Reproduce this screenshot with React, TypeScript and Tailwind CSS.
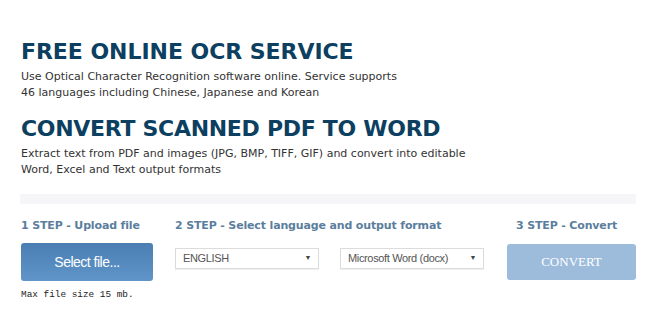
import React from 'react';

// Página de OCR: título, descrição e os três passos
const verdana = { fontFamily: 'Verdana, "DejaVu Sans", sans-serif' };

const Select: React.FC<{ label: string }> = ({ label }) => (
  <div className="flex h-[21px] w-[144px] items-center justify-between border border-[#dcdcdc] bg-white pl-[7px] pr-[7px] text-[11px] tracking-[-0.35px] text-[#555] shadow-[0_1px_1px_rgba(0,0,0,0.06)] [font-family:'Liberation_Sans',Arial,sans-serif]">
    <span>{label}</span>
    <span className="text-[7px] text-[#444]">▼</span>
  </div>
);

const App: React.FC = () => {
  return (
    <div className="h-[314px] w-[670px] overflow-hidden bg-white pl-[21px] pt-[38px]" style={verdana}>
      <h1 className="text-[22px] font-bold leading-[28px] tracking-[-0.05px] text-[#0c3f60]">FREE ONLINE OCR SERVICE</h1>
      <p className="mt-[3px] text-[11px] leading-[16px] text-[#333]">
        Use Optical Character Recognition software online. Service supports
        <br />
        46 languages including Chinese, Japanese and Korean
      </p>

      <h2 className="mt-[14px] text-[22px] font-bold leading-[28px] tracking-[-0.3px] text-[#0c3f60]">CONVERT SCANNED PDF TO WORD</h2>
      <p className="mt-[3px] text-[11px] leading-[16px] text-[#333]">
        Extract text from PDF and images (JPG, BMP, TIFF, GIF) and convert into editable
        <br />
        Word, Excel and Text output formats
      </p>

      <div className="mt-[16px] ml-[-1px] h-[10px] w-[616px] bg-[#f6f6f9]" />

      {/* Passos */}
      <div className="mt-[14px] flex gap-[22px]">
        <div className="flex w-[132px] flex-col">
          <div className="whitespace-nowrap text-[11px] font-bold leading-[16px] tracking-[-0.15px] text-[#5b7e9d]">1 STEP - Upload file</div>
          <button className="mt-[9px] h-[38px] w-[132px] rounded-[3px] bg-gradient-to-b from-[#4b7fb3] to-[#5f95c9] text-[14px] tracking-[-0.5px] text-white [font-family:'Liberation_Sans',Arial,sans-serif]">
            Select file...
          </button>
          <div className="mt-[8px] whitespace-nowrap text-[9.4px] leading-[12px] text-[#222] [font-family:'Liberation_Mono','Courier_New',monospace]">Max file size 15 mb.</div>
        </div>

        <div className="flex w-[310px] flex-col">
          <div className="whitespace-nowrap text-[11px] font-bold leading-[16px] tracking-[-0.15px] text-[#5b7e9d]">2 STEP - Select language and output format</div>
          <div className="mt-[14px] flex gap-[21px]">
            <Select label="ENGLISH" />
            <Select label="Microsoft Word (docx)" />
          </div>
        </div>

        <div className="flex w-[129px] flex-col items-center">
          <div className="whitespace-nowrap pr-[10px] text-[11px] font-bold leading-[16px] tracking-[-0.15px] text-[#5b7e9d]">3 STEP - Convert</div>
          <button className="mt-[10px] h-[36px] w-[129px] rounded-[3px] bg-[#9dbcdb] text-[13px] text-white [font-family:'Liberation_Serif','Times_New_Roman',serif]">
            CONVERT
          </button>
        </div>
      </div>
    </div>
  );
};

export default App;
